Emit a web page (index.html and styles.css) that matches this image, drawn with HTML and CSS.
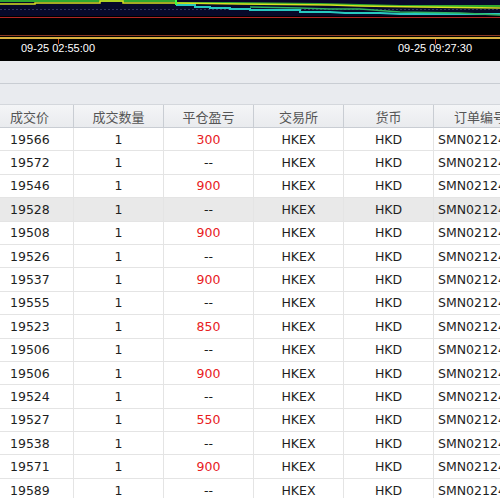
FILE: index.html
```html
<!DOCTYPE html>
<html>
<head>
<meta charset="utf-8">
<link rel="stylesheet" href="styles.css">
</head>
<body>
<div class="chart">
  <div class="navy"></div>
  <div class="hline red1"></div>
  <div class="hline red2"></div>
  <div class="hline yel"></div>
  <svg class="plot" width="500" height="20" viewBox="0 0 500 20">
    <line x1="0" y1="9.5" x2="500" y2="9.5" stroke="#33335e" stroke-width="1" stroke-dasharray="2 2"/>
    <polyline points="0,1 176,1 176,3 230,3 320,4 400,6 500,6" fill="none" stroke="#2fa82f" stroke-width="2"/>
    <polyline points="0,4 35,4 35,3 100,3 100,1 123,1 123,3 176,3 240,4 330,5 360,6 420,7 500,8" fill="none" stroke="#d8e020" stroke-width="1.5"/>
    <polyline points="176,5 195,5 195,7 210,7 210,8 230,8 230,9 250,9 250,10 300,10 300,12 330,12 345,13 380,13 400,14 500,14" fill="none" stroke="#28c8c0" stroke-width="2"/>
    <polyline points="250,7 300,8 330,9 360,9 400,12 460,13 500,15" fill="none" stroke="#30b060" stroke-width="1.5"/>
    <rect x="175" y="0" width="2" height="5" fill="#40ff40"/>
  </svg>
  <div class="tick tk1"></div>
  <div class="tick tk2"></div>
  <span class="time t1">09-25 02:55:00</span>
  <span class="time t2">09-25 09:27:30</span>
</div>
<div class="bar1"></div>
<div class="bar2"></div>
<div class="grid">
  <div class="row head">
    <div class="c c1">成交价</div><div class="c">成交数量</div><div class="c">平仓盈亏</div><div class="c">交易所</div><div class="c">货币</div><div class="c c6">订单编号</div>
  </div>
  <div class="row"><div class="c c1">19566</div><div class="c">1</div><div class="c red">300</div><div class="c">HKEX</div><div class="c">HKD</div><div class="c c6 l">SMN021245</div></div>
  <div class="row"><div class="c c1">19572</div><div class="c">1</div><div class="c">--</div><div class="c">HKEX</div><div class="c">HKD</div><div class="c c6 l">SMN021245</div></div>
  <div class="row"><div class="c c1">19546</div><div class="c">1</div><div class="c red">900</div><div class="c">HKEX</div><div class="c">HKD</div><div class="c c6 l">SMN021245</div></div>
  <div class="row sel"><div class="c c1">19528</div><div class="c">1</div><div class="c">--</div><div class="c">HKEX</div><div class="c">HKD</div><div class="c c6 l">SMN021245</div></div>
  <div class="row"><div class="c c1">19508</div><div class="c">1</div><div class="c red">900</div><div class="c">HKEX</div><div class="c">HKD</div><div class="c c6 l">SMN021245</div></div>
  <div class="row"><div class="c c1">19526</div><div class="c">1</div><div class="c">--</div><div class="c">HKEX</div><div class="c">HKD</div><div class="c c6 l">SMN021245</div></div>
  <div class="row"><div class="c c1">19537</div><div class="c">1</div><div class="c red">900</div><div class="c">HKEX</div><div class="c">HKD</div><div class="c c6 l">SMN021245</div></div>
  <div class="row"><div class="c c1">19555</div><div class="c">1</div><div class="c">--</div><div class="c">HKEX</div><div class="c">HKD</div><div class="c c6 l">SMN021245</div></div>
  <div class="row"><div class="c c1">19523</div><div class="c">1</div><div class="c red">850</div><div class="c">HKEX</div><div class="c">HKD</div><div class="c c6 l">SMN021245</div></div>
  <div class="row"><div class="c c1">19506</div><div class="c">1</div><div class="c">--</div><div class="c">HKEX</div><div class="c">HKD</div><div class="c c6 l">SMN021245</div></div>
  <div class="row"><div class="c c1">19506</div><div class="c">1</div><div class="c red">900</div><div class="c">HKEX</div><div class="c">HKD</div><div class="c c6 l">SMN021245</div></div>
  <div class="row"><div class="c c1">19524</div><div class="c">1</div><div class="c">--</div><div class="c">HKEX</div><div class="c">HKD</div><div class="c c6 l">SMN021245</div></div>
  <div class="row"><div class="c c1">19527</div><div class="c">1</div><div class="c red">550</div><div class="c">HKEX</div><div class="c">HKD</div><div class="c c6 l">SMN021245</div></div>
  <div class="row"><div class="c c1">19538</div><div class="c">1</div><div class="c">--</div><div class="c">HKEX</div><div class="c">HKD</div><div class="c c6 l">SMN021245</div></div>
  <div class="row"><div class="c c1">19571</div><div class="c">1</div><div class="c red">900</div><div class="c">HKEX</div><div class="c">HKD</div><div class="c c6 l">SMN021245</div></div>
  <div class="row"><div class="c c1">19589</div><div class="c">1</div><div class="c">--</div><div class="c">HKEX</div><div class="c">HKD</div><div class="c c6 l">SMN021245</div></div>
</div>
</body>
</html>
```
FILE: styles.css
```css
html, body {
  margin: 0;
  padding: 0;
  width: 500px;
  height: 498px;
  overflow: hidden;
  background: #ffffff;
}
.chart {
  position: relative;
  height: 61px;
  background: #000000;
  overflow: hidden;
}
.navy {
  position: absolute;
  left: 0;
  top: 0;
  width: 500px;
  height: 16px;
  background: #07092a;
}
.plot {
  position: absolute;
  left: 0;
  top: 0;
  display: block;
}
.hline {
  position: absolute;
  left: 0;
  width: 500px;
  height: 1px;
}
.red1 { top: 17px; background: #b02424; }
.red2 { top: 35px; background: #8a3522; }
.yel { top: 37px; height: 2px; background: #d8b040; }
.tick {
  position: absolute;
  top: 39px;
  width: 1px;
  height: 5px;
  background: #c84a22;
}
.tk1 { left: 58px; }
.tk2 { left: 435px; }
.time {
  position: absolute;
  top: 42px;
  font-family: "Liberation Sans", Arial, sans-serif;
  font-size: 11px;
  line-height: 13px;
  color: #ffffff;
}
.t1 { left: 21px; }
.t2 { left: 398px; }
.bar1 {
  height: 22px;
  background: #e9ebef;
  border-bottom: 1px solid #c9cdd3;
}
.bar2 {
  height: 20px;
  background: #e9ebef;
  border-bottom: 1px solid #d4d7dc;
}
.grid {
  overflow: hidden;
  width: 500px;
}
.row {
  display: flex;
  height: 23.4px;
  box-sizing: border-box;
  border-bottom: 1px solid #e4e4e4;
  font-family: "DejaVu Sans", Verdana, sans-serif;
  font-size: 12.5px;
  color: #1e1e1e;
  white-space: nowrap;
}
.row.sel {
  background: #e9e9e9;
}
.c {
  flex: 0 0 90px;
  box-sizing: border-box;
  border-right: 1px solid #e4e4e4;
  display: flex;
  align-items: center;
  justify-content: center;
  overflow: hidden;
}
.c1 {
  flex-basis: 74px;
  justify-content: flex-start;
  padding-left: 10px;
}
.c6 {
  flex-basis: 100px;
  border-right: none;
}
.c6.l {
  justify-content: flex-start;
  padding-left: 4px;
}
.red {
  color: #e8201e;
}
.head {
  height: 23px;
  background: linear-gradient(#f4f5f7, #e9ebee);
  border-bottom: 1px solid #c9cdd3;
  font-family: "Noto Sans CJK SC", sans-serif;
  font-size: 13px;
  color: #555555;
}
.head .c {
  border-right: 1px solid #c9cdd3;
}
.head .c6 {
  justify-content: flex-start;
  padding-left: 20px;
  border-right: none;
}
```
